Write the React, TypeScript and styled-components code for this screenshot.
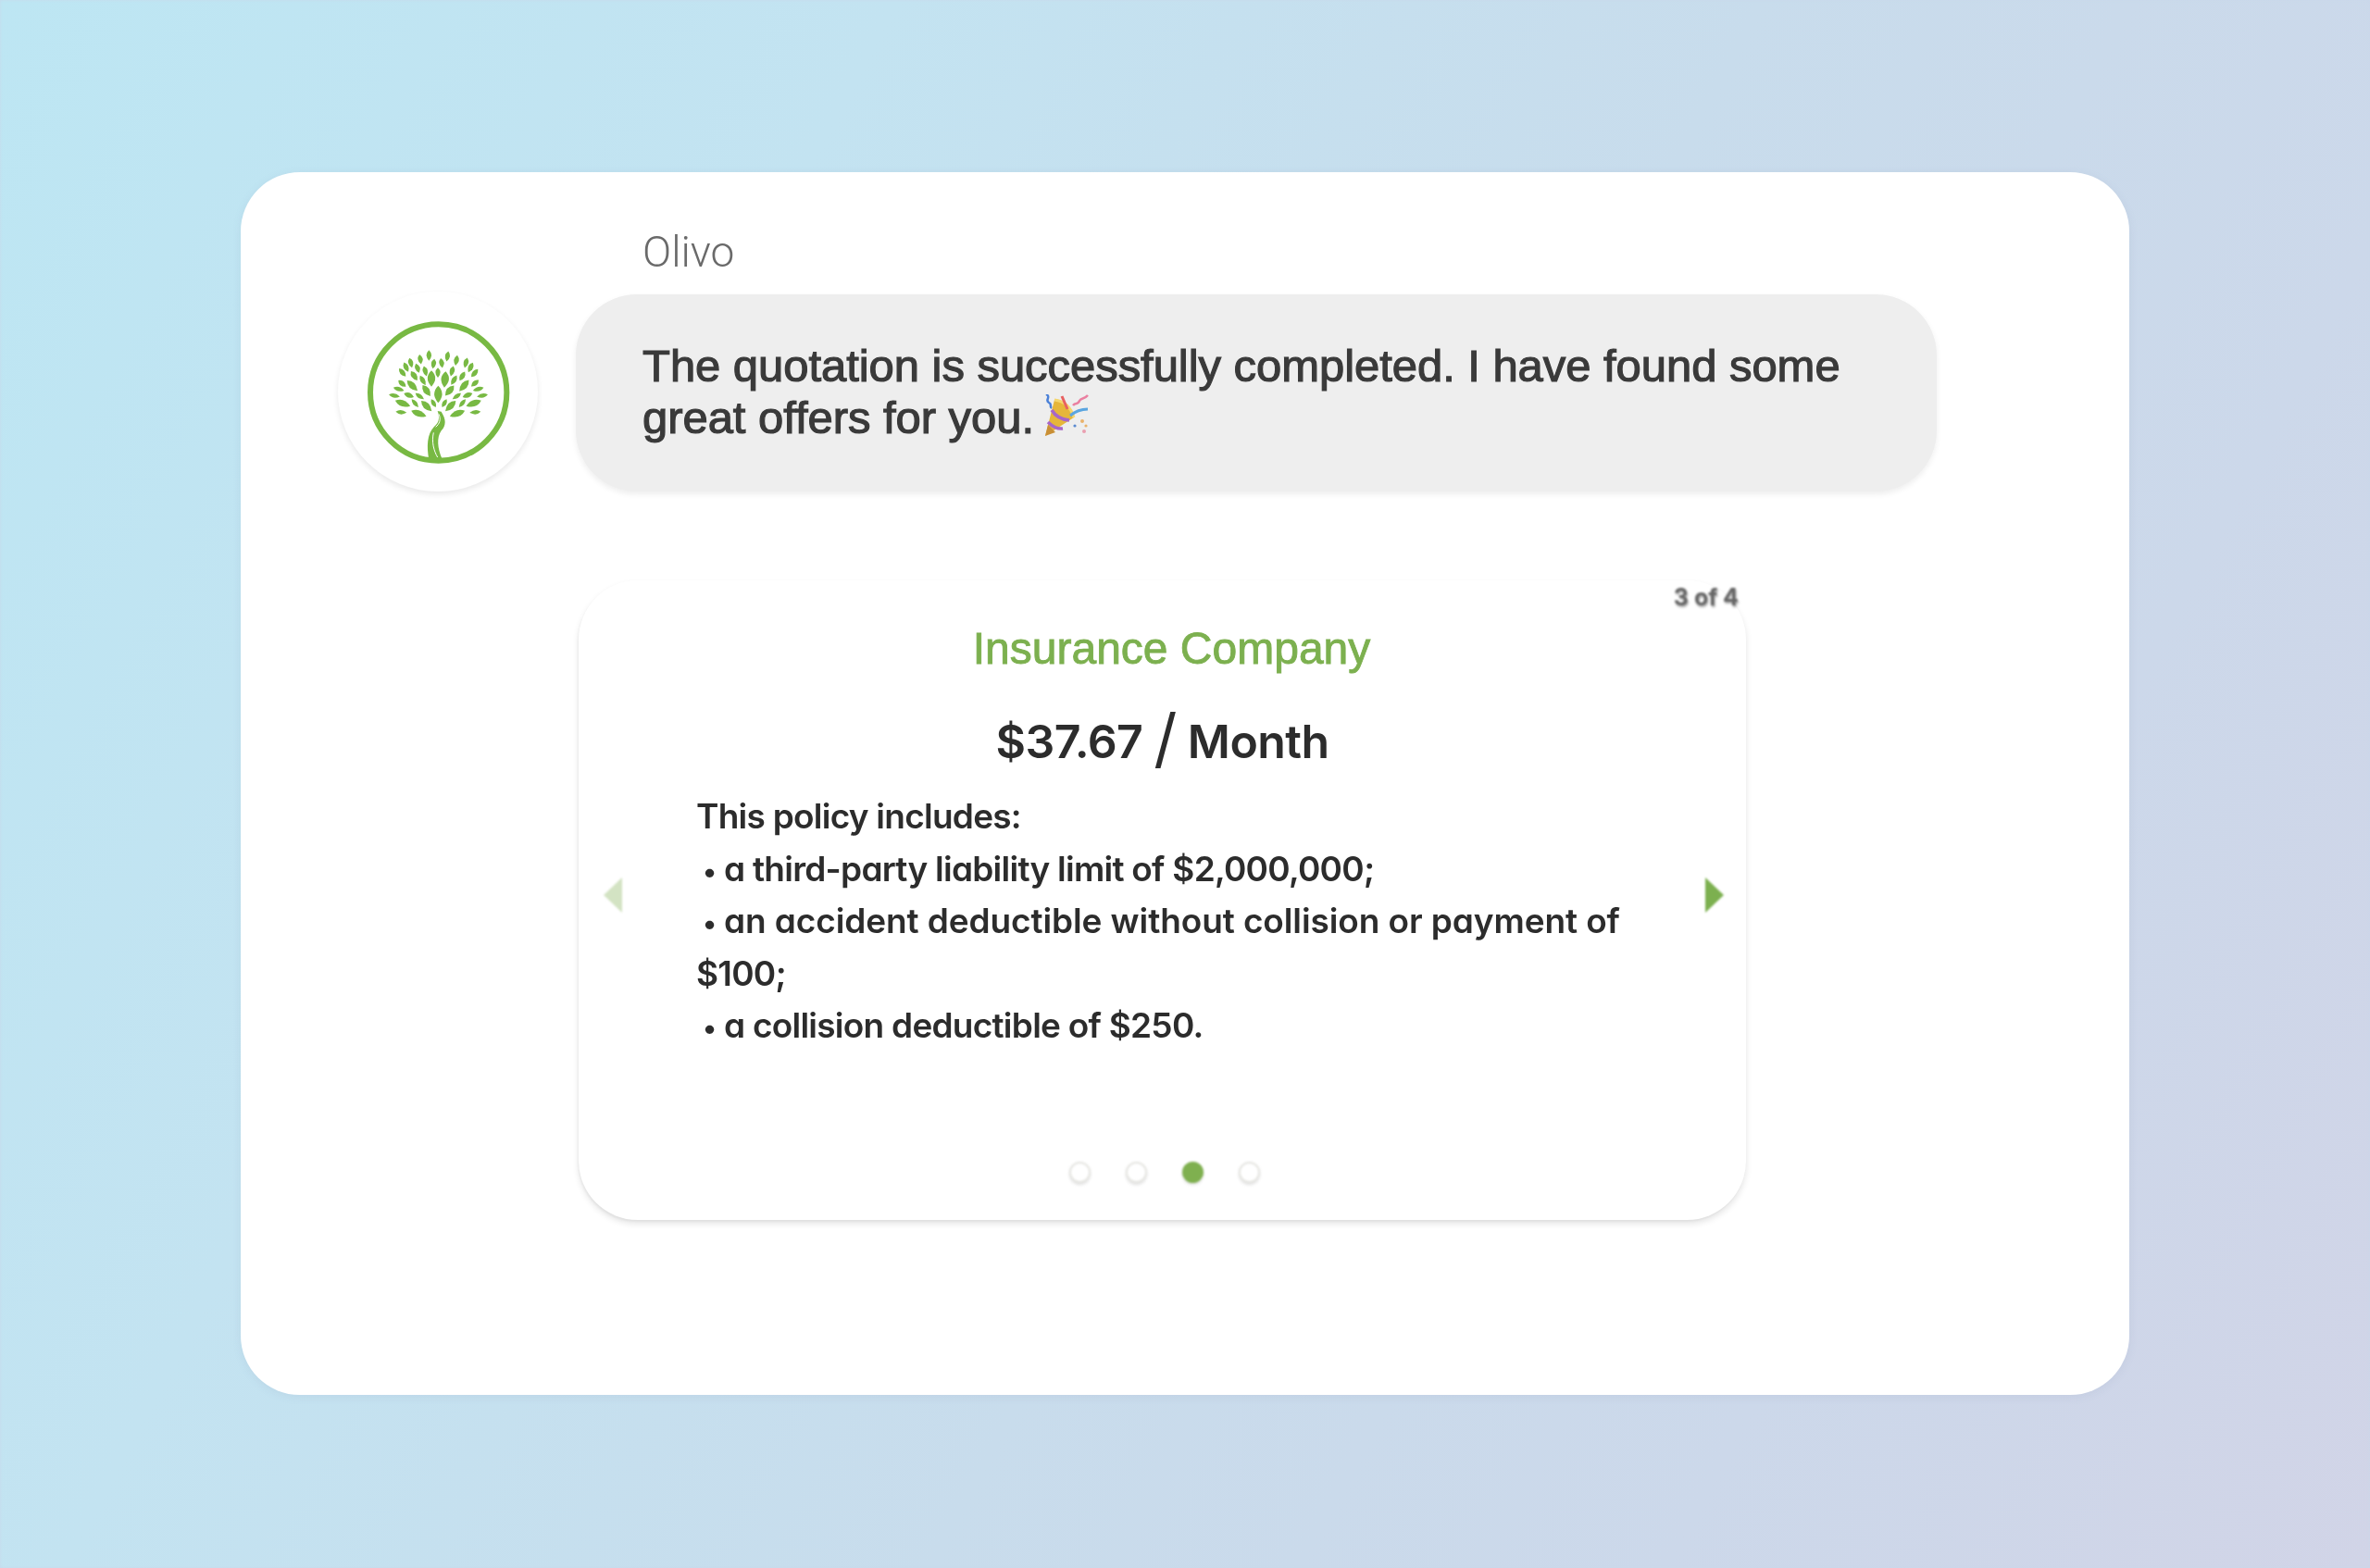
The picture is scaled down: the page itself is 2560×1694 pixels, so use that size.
import React from "react";
import styled, { createGlobalStyle } from "styled-components";

const Global = createGlobalStyle`
  html, body { margin: 0; padding: 0; }
  body { font-family: "Liberation Sans", Arial, sans-serif; }
`;

const Page = styled.div`
  width: 2560px;
  height: 1694px;
  box-sizing: border-box;
  padding-top: 186px;
  display: flex;
  justify-content: center;
  align-items: flex-start;
  overflow: hidden;
  background: linear-gradient(118deg, #bde6f3 0%, #c3e3f1 28%, #c8dcec 55%, #ccd8ea 78%, #d1d4e7 100%);
  box-shadow: inset 0 0 3px #c8d7ea;
`;

const Panel = styled.main`
  width: 2040px;
  height: 1321px;
  box-sizing: border-box;
  padding: 58px 0 0 105px;
  background: #fff;
  border-radius: 64px;
  box-shadow: 0 2px 10px rgba(120, 140, 170, 0.12);
`;

const MessageGrid = styled.div`
  display: grid;
  grid-template-columns: 216px 1470px;
  column-gap: 41px;
  align-items: start;
`;

const SenderName = styled.div`
  grid-column: 2;
  height: 74px;
  padding-left: 72px;
  font-family: Roboto, "Liberation Sans", sans-serif;
  font-weight: 300;
  font-size: 46px;
  line-height: 56px;
  color: #6a6a6a;
  filter: blur(0.4px);
`;

const Avatar = styled.div`
  width: 216px;
  height: 216px;
  margin-top: -3px;
  border-radius: 50%;
  background: #fff;
  box-shadow: 0 3px 6px rgba(0, 0, 0, 0.09);
  display: flex;
  filter: blur(0.5px);
`;

const Bubble = styled.div`
  height: 213px;
  box-sizing: border-box;
  padding: 49px 60px 0 72px;
  background: #eeeeee;
  border-radius: 66px;
  box-shadow: 0 3px 6px rgba(0, 0, 0, 0.07);
  font-size: 49px;
  line-height: 56px;
  letter-spacing: -0.05px;
  color: #3a3a3a;
  -webkit-text-stroke: 1.2px #3a3a3a;
  filter: blur(0.4px);
`;

const Emoji = styled.svg`
  width: 52px;
  height: 48px;
  vertical-align: -6px;
  margin-left: -4px;
`;

const Card = styled.section`
  position: relative;
  width: 1261px;
  height: 691px;
  box-sizing: border-box;
  margin: 96px 0 0 260px;
  padding: 40px 0 0 127px;
  border-radius: 64px;
  background: #fff;
  box-shadow: 0 4px 7px rgba(0, 0, 0, 0.11), -1px 2px 2px rgba(0, 0, 0, 0.03);
  font-family: Inter, "Liberation Sans", sans-serif;
  font-feature-settings: "cv11" 1;
  color: #2c2c2c;
`;

const Counter = styled.div`
  position: absolute;
  top: 5px;
  right: 8px;
  font-size: 25px;
  line-height: 26px;
  font-weight: 700;
  color: #666;
  text-shadow: 1px 2px 2px rgba(0, 0, 0, 0.35);
  filter: blur(1px);
`;

const Title = styled.h2`
  margin: 0 0 0 -107px;
  text-align: center;
  font-family: "Liberation Sans", Arial, sans-serif;
  font-weight: 400;
  font-size: 48px;
  line-height: 68px;
  color: #7cb04f;
  -webkit-text-stroke: 0.9px #7cb04f;
  filter: blur(0.4px);
`;

const Price = styled.div`
  margin: 30px 0 0 -127px;
  text-align: center;
  font-size: 50px;
  line-height: 72px;
  font-weight: 600;
  letter-spacing: -0.6px;
  filter: blur(0.7px);
`;

const Slash = styled.span`
  font-size: 70px;
  line-height: 0;
  font-weight: 400;
  vertical-align: -3px;
`;

const Policy = styled.div`
  margin-top: 17px;
  width: 1030px;
  font-size: 37px;
  line-height: 56.5px;
  font-weight: 600;
  letter-spacing: -0.75px;
  filter: blur(0.7px);
`;

const PolicyItem = styled.div<{ $spacing?: number }>`
  height: 56.5px;
  white-space: nowrap;
  ${(p) => (p.$spacing !== undefined ? `letter-spacing: ${p.$spacing}px;` : "")}
`;

const Bullet = styled.span`
  display: inline-block;
  width: 23px;
  margin-left: 7px;
  font-size: 30px;
  line-height: 1;
`;

const Arrow = styled.div<{ $side: "left" | "right"; $muted?: boolean }>`
  position: absolute;
  top: 321px;
  ${(p) => (p.$side === "left" ? "left: 27px;" : "right: 24px;")}
  width: 0;
  height: 0;
  border-top: 19px solid transparent;
  border-bottom: 19px solid transparent;
  ${(p) =>
    p.$side === "left"
      ? `border-right: 20px solid ${p.$muted ? "#d3e3c3" : "#7cb04f"};`
      : `border-left: 20px solid ${p.$muted ? "#d3e3c3" : "#7cb04f"};`}
  filter: blur(1px);
`;

const Dots = styled.div`
  position: absolute;
  left: 530px;
  top: 628px;
  display: flex;
  gap: 38px;
`;

const Dot = styled.span<{ $active?: boolean }>`
  width: 23px;
  height: 23px;
  box-sizing: border-box;
  border-radius: 50%;
  background: ${(p) => (p.$active ? "#7fb04f" : "#fff")};
  border: 2px solid ${(p) => (p.$active ? "#7fb04f" : "#e6e6e2")};
  box-shadow: 0 2px 3px rgba(0, 0, 0, 0.12);
  filter: blur(0.8px);
`;

const leaves: [number, number, number, number, number][] = [
  [370, 490, 17, 7, 0], [430, 493, 17, 7, 10], [342, 503, 16, 7, -10], [459, 506, 17, 7, 10],
  [311, 514, 16, 7, -15], [490, 514, 17, 7, 15], [296, 528, 17, 7, -25], [505, 529, 17, 7, 25],
  [284, 545, 17, 7, -40], [518, 547, 17, 7, 40], [385, 517, 16, 7, 10], [411, 515, 16, 7, -10],
  [333, 531, 16, 7, -20], [358, 541, 17, 7, -15], [399, 546, 16, 7, 0], [445, 541, 17, 7, 15],
  [478, 557, 17, 7, 30], [322, 556, 18, 8, -35], [378, 565, 26, 11, 0], [422, 568, 26, 11, 5],
  [350, 571, 18, 7, -30], [451, 570, 18, 7, 30], [283, 581, 16, 7, -50], [519, 580, 16, 7, 50],
  [316, 588, 24, 9, -45], [484, 588, 24, 9, 40], [362, 604, 22, 9, -35], [437, 604, 22, 9, 40],
  [400, 616, 28, 11, 0], [272, 599, 18, 6, -75], [530, 599, 18, 6, 75], [258, 620, 18, 6, -80],
  [543, 620, 18, 6, 80], [305, 619, 17, 7, -70], [495, 619, 17, 7, 70], [340, 622, 17, 6, -55],
  [460, 622, 17, 6, 55], [285, 645, 26, 9, -70], [515, 645, 26, 9, 70], [325, 645, 17, 6, -40],
  [478, 645, 17, 6, 40], [362, 654, 24, 9, -45], [440, 654, 24, 9, 45], [385, 645, 15, 6, -30],
  [420, 645, 15, 6, 30], [280, 674, 18, 6, -85], [520, 674, 18, 6, 85], [337, 678, 26, 9, -70],
  [462, 678, 26, 9, 70],
];

const TreeLogo = () => (
  <svg width="216" height="216" viewBox="75 283 648 648">
    <circle cx="401" cy="610" r="221" fill="none" stroke="#78b943" strokeWidth="18" />
    <g fill="#78b943">
      {leaves.map(([x, y, l, w, r], i) => (
        <path
          key={i}
          transform={`translate(${x} ${y}) rotate(${r})`}
          d={`M0 ${-l}Q${w * 2.3} ${-l * 0.1} 0 ${l}Q${-w * 2.3} ${-l * 0.1} 0 ${-l}Z`}
        />
      ))}
      <path d="M370 828C362 785 364 745 386 722C402 708 406 694 398 670L410 672C426 698 426 716 410 734C394 756 398 792 412 824Z" />
    </g>
    <path d="M385 740C378 770 386 800 398 820M402 680C410 698 404 712 392 722" fill="none" stroke="#fff" strokeWidth="3" />
  </svg>
);

const PartyPopper = () => (
  <Emoji viewBox="0 0 52 48">
    <path d="M2 45L12 6Q28 8 33 25Z" fill="#e6b63a" />
    <path d="M2 45L5 33L13 41Z" fill="#c98f35" />
    <path d="M5 30Q13 38 21 37M9 17Q15 27 28 28" fill="none" stroke="#a766c8" strokeWidth="3.5" />
    <path d="M12 6Q28 8 33 25" fill="none" stroke="#f5d66e" strokeWidth="3" />
    <path d="M3 0C9 3 1 6 6 9C10 11 6 13 9 15" fill="none" stroke="#4a80d8" strokeWidth="2.5" />
    <path d="M20 2L26 16" fill="none" stroke="#e86060" strokeWidth="3" />
    <path d="M32 12C35 8 37 12 39 7C41 3 44 6 48 1" fill="none" stroke="#ea7fa0" strokeWidth="2.5" />
    <path d="M29 23C35 18 41 16 48 16" fill="none" stroke="#5aa5e0" strokeWidth="3" />
    <circle cx="42" cy="29" r="2" fill="#e9b26a" />
    <circle cx="46" cy="34" r="1.6" fill="#e9b26a" />
    <circle cx="44" cy="40" r="2" fill="#ea9fb0" />
    <circle cx="34" cy="34" r="1.6" fill="#5a8ad0" />
  </Emoji>
);

export default function App() {
  return (
    <Page>
      <Global />
      <Panel>
        <MessageGrid>
          <SenderName>Olivo</SenderName>
          <Avatar>
            <TreeLogo />
          </Avatar>
          <Bubble>
            The quotation is successfully completed. I have found some great offers for you. <PartyPopper />
          </Bubble>
        </MessageGrid>
        <Card>
          <Counter>3 of 4</Counter>
          <Title>Insurance Company</Title>
          <Price>$37.67 <Slash>/</Slash> Month</Price>
          <Policy>
            <PolicyItem>This policy includes:</PolicyItem>
            <PolicyItem><Bullet>•</Bullet>a third-party liability limit of $2,000,000;</PolicyItem>
            <PolicyItem $spacing={-0.1}><Bullet>•</Bullet>an accident deductible without collision or payment of</PolicyItem>
            <PolicyItem>$100;</PolicyItem>
            <PolicyItem><Bullet>•</Bullet>a collision deductible of $250.</PolicyItem>
          </Policy>
          <Arrow $side="left" $muted />
          <Arrow $side="right" />
          <Dots>
            <Dot />
            <Dot />
            <Dot $active />
            <Dot />
          </Dots>
        </Card>
      </Panel>
    </Page>
  );
}
